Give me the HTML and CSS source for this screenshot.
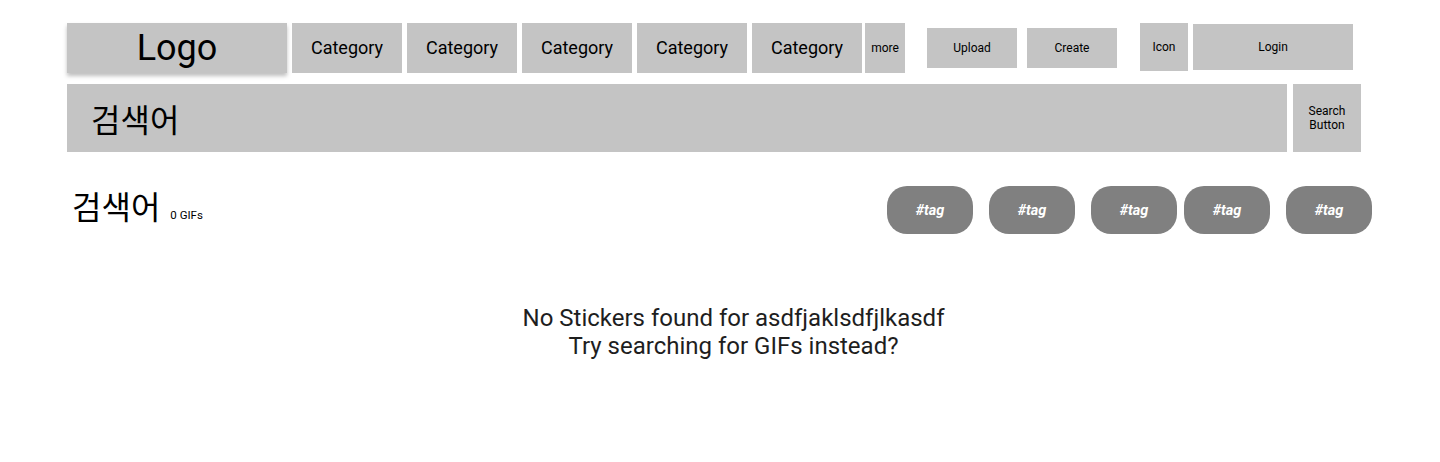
FILE: index.html
```html
<!DOCTYPE html>
<html lang="ko">
<head>
<meta charset="utf-8">
<title>Stickers search</title>
<link rel="stylesheet" href="styles.css">
</head>
<body>
<div class="page">
  <header class="topbar">
    <div class="logo">Logo</div>
    <nav class="cats">
      <a class="cat">Category</a>
      <a class="cat">Category</a>
      <a class="cat">Category</a>
      <a class="cat">Category</a>
      <a class="cat">Category</a>
      <a class="more">more</a>
    </nav>
    <a class="action upload">Upload</a>
    <a class="action create">Create</a>
    <a class="icon-btn">Icon</a>
    <a class="login">Login</a>
  </header>

  <div class="searchrow">
    <div class="searchbox">검색어</div>
    <button class="searchbtn">Search<br>Button</button>
  </div>

  <div class="resulthead">
    <h1 class="term">검색어<span class="count">0 GIFs</span></h1>
    <div class="tags">
      <span class="tag">#tag</span>
      <span class="tag">#tag</span>
      <span class="tag">#tag</span>
      <span class="tag tight">#tag</span>
      <span class="tag">#tag</span>
    </div>
  </div>

  <p class="empty">No Stickers found for asdfjaklsdfjlkasdf<br>Try searching for GIFs instead?</p>
</div>
</body>
</html>
```

FILE: styles.css
```css
* { box-sizing: border-box; }
html, body { margin: 0; padding: 0; background: #fff; }
body {
  font-family: Roboto, "Noto Sans CJK KR", sans-serif;
  color: #000;
  height: 462px;
  overflow: hidden;
}
.page {
  padding: 23px 40px 0 67px;
}
.topbar {
  display: flex;
  align-items: flex-start;
  height: 50px;
}
.logo {
  width: 220px;
  height: 50px;
  background: #c4c4c4;
  box-shadow: 0 3px 4px rgba(0,0,0,0.25);
  font-size: 36px;
  line-height: 50px;
  text-align: center;
}
.cats {
  display: flex;
  margin-left: 5px;
}
.cat {
  width: 110px;
  height: 50px;
  margin-right: 5px;
  background: #c4c4c4;
  font-size: 18px;
  line-height: 50px;
  text-align: center;
}
.more {
  width: 40px;
  height: 50px;
  margin-left: -2px;
  background: #c4c4c4;
  font-size: 12px;
  line-height: 50px;
  text-align: center;
}
.action {
  width: 90px;
  height: 40px;
  margin-top: 5px;
  background: #c4c4c4;
  font-size: 12px;
  line-height: 40px;
  text-align: center;
}
.upload { margin-left: 22px; }
.create { margin-left: 10px; }
.icon-btn {
  width: 48px;
  height: 48px;
  margin-left: 23px;
  background: #c4c4c4;
  font-size: 12px;
  line-height: 48px;
  text-align: center;
}
.login {
  width: 160px;
  height: 46px;
  margin-top: 1px;
  margin-left: 5px;
  background: #c4c4c4;
  font-size: 12px;
  line-height: 46px;
  text-align: center;
}
.searchrow {
  display: flex;
  gap: 6px;
  margin-top: 11px;
  height: 68px;
}
.searchbox {
  width: 1220px;
  height: 68px;
  background: #c4c4c4;
  padding-left: 24px;
  font-family: "Noto Sans CJK KR", Roboto, sans-serif;
  font-size: 32px;
  line-height: 68px;
}
.searchbtn {
  width: 68px;
  height: 68px;
  border: 0;
  padding: 0;
  background: #c4c4c4;
  font-family: Roboto, sans-serif;
  font-size: 12px;
  line-height: 14px;
  color: #000;
}
.resulthead {
  display: flex;
  align-items: center;
  justify-content: space-between;
  width: 1305px;
  margin-top: 34px;
  height: 48px;
}
.term {
  margin: 0 0 0 5px;
  font-family: "Noto Sans CJK KR", Roboto, sans-serif;
  font-weight: 400;
  font-size: 32px;
  line-height: 40px;
}
.count {
  font-family: Roboto, sans-serif;
  font-size: 11.5px;
  margin-left: 10px;
}
.tags {
  display: flex;
}
.tag {
  width: 86px;
  height: 48px;
  margin-left: 16px;
  border-radius: 20px;
  background: #808080;
  color: #fff;
  font-weight: 700;
  font-style: italic;
  font-size: 14.5px;
  line-height: 50px;
  text-align: center;
}
.tag:first-child { margin-left: 0; }
.tag.tight { margin-left: 7px; }
.empty {
  margin: 70px 0 0;
  text-align: center;
  font-size: 24px;
  line-height: 28px;
  color: #1e1e1e;
}
```
